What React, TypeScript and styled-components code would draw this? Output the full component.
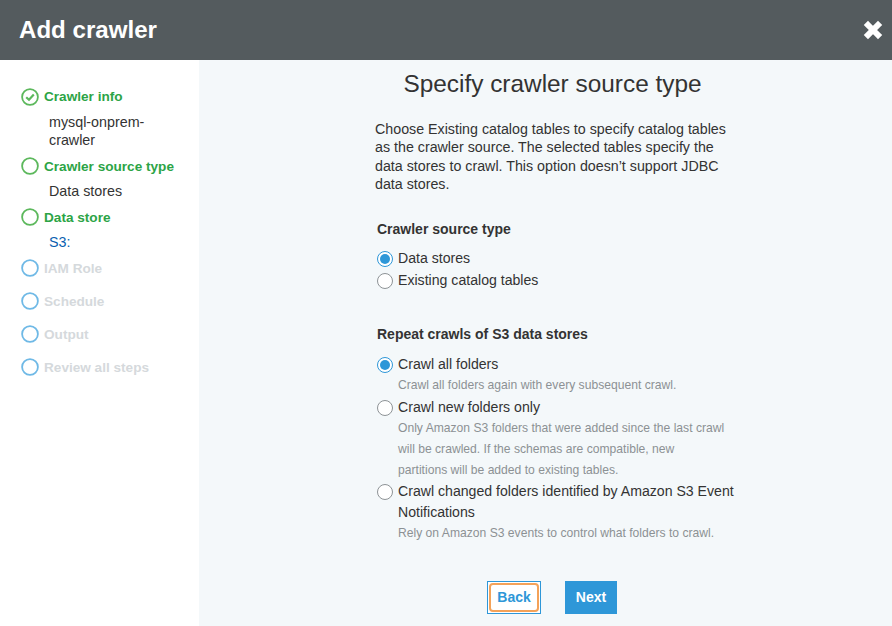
import React from 'react'
import styled, { createGlobalStyle } from 'styled-components'

const GlobalStyle = createGlobalStyle`
  html, body {
    margin: 0;
    padding: 0;
    background: #f4f8fa;
  }

  * {
    box-sizing: border-box;
  }

  body {
    font-family: "Liberation Sans", Arial, sans-serif;
    color: #333;
    -webkit-font-smoothing: antialiased;
  }
`

const Page = styled.div`
  width: 892px;
  height: 626px;
  overflow: hidden;
  display: flex;
  flex-direction: column;
`

const Header = styled.header`
  height: 60px;
  flex: none;
  background: #545b5e;
  display: flex;
  align-items: center;
  justify-content: space-between;
  padding: 0 9px 0 19px;
`

const HeaderTitle = styled.h1`
  margin: 0;
  font-size: 24.1px;
  line-height: 30px;
  font-weight: 700;
  color: #fff;
`

const Body = styled.div`
  flex: 1;
  display: flex;
  min-height: 0;
`

const Sidebar = styled.nav`
  width: 199px;
  flex: none;
  background: #fff;
  padding: 26.5px 0 0 21px;
`

const Step = styled.div<{ $active?: boolean }>`
  display: flex;
  align-items: center;
  gap: 5px;
  height: 20px;
  margin-bottom: 13px;
  font-size: 13.6px;
  font-weight: 700;
  color: ${(p) => (p.$active ? '#2ca446' : '#d5d9dc')};

  &.with-detail {
    margin-bottom: 6px;
  }
`

const StepDetail = styled.div<{ $link?: boolean }>`
  margin: 0 0 6.5px 28px;
  width: 120px;
  font-size: 14.3px;
  line-height: 18.5px;
  color: ${(p) => (p.$link ? '#0b5fb0' : '#333')};
`

const Main = styled.main`
  flex: 1;
  padding: 8px 0 0 176px;
`

const Column = styled.div`
  width: 360px;
`

const Title = styled.h2`
  margin: 0 0 20px;
  width: 355px;
  text-align: center;
  font-size: 24.4px;
  line-height: 32px;
  font-weight: 400;
  color: #333;
  white-space: nowrap;
`

const Intro = styled.p`
  margin: 0 0 26px;
  width: 360px;
  font-size: 14.25px;
  line-height: 18.3px;
  color: #333;
`

const Section = styled.section`
  margin-left: 2px;
  margin-bottom: 33px;

  &:last-of-type {
    margin-bottom: 0;
  }
`

const SectionTitle = styled.h3<{ $after: number }>`
  margin: 0 0 ${(p) => p.$after}px;
  font-size: 14px;
  line-height: 20px;
  font-weight: 700;
  color: #333;
`

const OptionList = styled.div<{ $gap: number }>`
  display: flex;
  flex-direction: column;
  gap: ${(p) => p.$gap}px;
`

const Option = styled.div`
  display: grid;
  grid-template-columns: 16px 1fr;
  column-gap: 5px;
  font-size: 14.12px;
  line-height: 21px;
  color: #333;
`

const Radio = styled.span<{ $checked?: boolean }>`
  width: 16px;
  height: 16px;
  margin-top: 3px;
  border-radius: 50%;
  background: #fff;
  border: 1px solid ${(p) => (p.$checked ? '#2e97d8' : '#8e9396')};
  display: flex;
  align-items: center;
  justify-content: center;

  &::after {
    content: '';
    width: 10px;
    height: 10px;
    border-radius: 50%;
    background: ${(p) => (p.$checked ? '#2e97d8' : 'transparent')};
  }
`

const Hint = styled.div`
  grid-column: 2;
  max-width: 328px;
  font-size: 12.13px;
  line-height: 21px;
  color: #8c9194;
  padding-bottom: 0.6px;
`

const Footer = styled.div`
  display: flex;
  gap: 24px;
  margin: 36px 0 0 112px;
`

const BackButton = styled.button`
  width: 54px;
  height: 33px;
  padding: 1px;
  background: #fff;
  border: 1px solid #2e97d8;
  display: flex;
  font: 700 14px "Liberation Sans", Arial, sans-serif;
  color: #2e97d8;
`

const BackLabel = styled.span`
  flex: 1;
  display: flex;
  align-items: center;
  justify-content: center;
  border: 2px solid #f4a259;
  border-radius: 4px;
`

const NextButton = styled.button`
  width: 52px;
  height: 33px;
  padding: 0;
  border: none;
  background: #2e97d8;
  font: 700 14px "Liberation Sans", Arial, sans-serif;
  color: #fff;
`

const StepIcon = ({ color, done }: { color: string; done?: boolean }) => (
  <svg width="18" height="18" viewBox="0 0 18 18" fill="none">
    <circle cx="9" cy="9" r="7.9" stroke={color} strokeWidth="1.8" />
    {done && (
      <path d="M5.2 9.2 8 11.8 12.8 6.6" stroke={color} strokeWidth="2.2" />
    )}
  </svg>
)

const CloseIcon = () => (
  <svg width="20" height="20" viewBox="0 0 20 20" fill="none">
    <path
      d="M5 5 15 15M15 5 5 15"
      stroke="#fff"
      strokeWidth="6"
      strokeLinecap="square"
    />
  </svg>
)

const App: React.FC = () => (
  <>
    <GlobalStyle />
    <Page>
      <Header>
        <HeaderTitle>Add crawler</HeaderTitle>
        <CloseIcon />
      </Header>
      <Body>
        <Sidebar>
          <Step $active className="with-detail">
            <StepIcon color="#5cb85c" done />
            Crawler info
          </Step>
          <StepDetail>mysql-onprem-crawler</StepDetail>
          <Step $active className="with-detail">
            <StepIcon color="#5cb85c" />
            Crawler source type
          </Step>
          <StepDetail>Data stores</StepDetail>
          <Step $active className="with-detail">
            <StepIcon color="#5cb85c" />
            Data store
          </Step>
          <StepDetail $link>S3:</StepDetail>
          <Step>
            <StepIcon color="#6fb9e6" />
            IAM Role
          </Step>
          <Step>
            <StepIcon color="#6fb9e6" />
            Schedule
          </Step>
          <Step>
            <StepIcon color="#6fb9e6" />
            Output
          </Step>
          <Step>
            <StepIcon color="#6fb9e6" />
            Review all steps
          </Step>
        </Sidebar>
        <Main>
          <Column>
            <Title>Specify crawler source type</Title>
            <Intro>
              Choose Existing catalog tables to specify catalog tables as the
              crawler source. The selected tables specify the data stores to
              crawl. This option doesn’t support JDBC data stores.
            </Intro>
            <Section>
              <SectionTitle $after={9}>Crawler source type</SectionTitle>
              <OptionList $gap={1}>
                <Option>
                  <Radio $checked />
                  Data stores
                </Option>
                <Option>
                  <Radio />
                  Existing catalog tables
                </Option>
              </OptionList>
            </Section>
            <Section>
              <SectionTitle $after={10}>Repeat crawls of S3 data stores</SectionTitle>
              <OptionList $gap={0}>
                <Option>
                  <Radio $checked />
                  Crawl all folders
                  <Hint>Crawl all folders again with every subsequent crawl.</Hint>
                </Option>
                <Option>
                  <Radio />
                  Crawl new folders only
                  <Hint>
                    Only Amazon S3 folders that were added since the last crawl
                    will be crawled. If the schemas are compatible, new
                    partitions will be added to existing tables.
                  </Hint>
                </Option>
                <Option>
                  <Radio />
                  Crawl changed folders identified by Amazon S3 Event
                  Notifications
                  <Hint>Rely on Amazon S3 events to control what folders to crawl.</Hint>
                </Option>
              </OptionList>
            </Section>
            <Footer>
              <BackButton>
                <BackLabel>Back</BackLabel>
              </BackButton>
              <NextButton>Next</NextButton>
            </Footer>
          </Column>
        </Main>
      </Body>
    </Page>
  </>
)

export default App
